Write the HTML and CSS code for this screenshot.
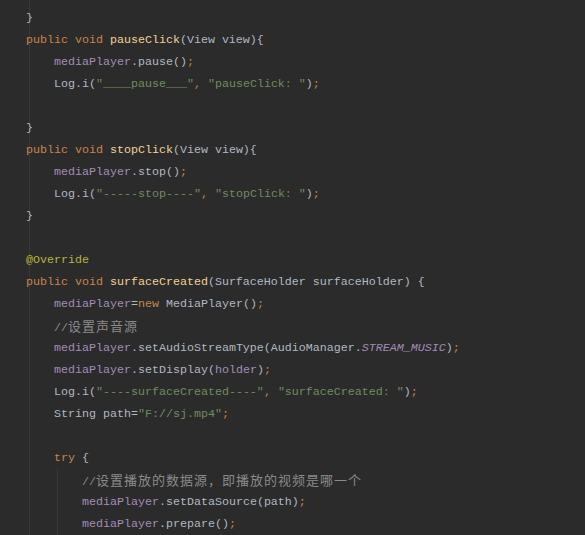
FILE: index.html
```html
<!DOCTYPE html>
<html lang="zh">
<head>
    <meta charset="UTF-8">
    <meta name="viewport" content="width=device-width, initial-scale=1.0">
    <title>SurfaceView</title>
    <link rel="stylesheet" href="styles.css">
</head>
<body>
    <div class="editor">
        <div class="line l0">}</div>
        <div class="line l0"><span class="kw">public void </span><span class="fn">pauseClick</span>(View view){</div>
        <div class="line l1"><span class="field">mediaPlayer</span>.pause()<span class="kw">;</span></div>
        <div class="line l1">Log.i(<span class="str">"____pause___"</span><span class="kw">, </span><span class="str">"pauseClick: "</span>)<span class="kw">;</span></div>
        <div class="line l0"> </div>
        <div class="line l0">}</div>
        <div class="line l0"><span class="kw">public void </span><span class="fn">stopClick</span>(View view){</div>
        <div class="line l1"><span class="field">mediaPlayer</span>.stop()<span class="kw">;</span></div>
        <div class="line l1">Log.i(<span class="str">"-----stop----"</span><span class="kw">, </span><span class="str">"stopClick: "</span>)<span class="kw">;</span></div>
        <div class="line l0">}</div>
        <div class="line l0"> </div>
        <div class="line l0"><span class="ann">@Override</span></div>
        <div class="line l0"><span class="kw">public void </span><span class="fn">surfaceCreated</span>(SurfaceHolder surfaceHolder) {</div>
        <div class="line l1"><span class="field">mediaPlayer</span>=<span class="kw">new </span>MediaPlayer()<span class="kw">;</span></div>
        <div class="line l1"><span class="comment">//<span class="cjk">设置声音源</span></span></div>
        <div class="line l1"><span class="field">mediaPlayer</span>.setAudioStreamType(AudioManager.<span class="const">STREAM_MUSIC</span>)<span class="kw">;</span></div>
        <div class="line l1"><span class="field">mediaPlayer</span>.setDisplay(<span class="field">holder</span>)<span class="kw">;</span></div>
        <div class="line l1">Log.i(<span class="str">"----surfaceCreated----"</span><span class="kw">, </span><span class="str">"surfaceCreated: "</span>)<span class="kw">;</span></div>
        <div class="line l1">String path=<span class="str">"F://sj.mp4"</span><span class="kw">;</span></div>
        <div class="line l1"> </div>
        <div class="line l1"><span class="kw">try </span>{</div>
        <div class="try-body">
            <div class="line l2"><span class="comment">//<span class="cjk">设置播放的数据源，即播放的视频是哪一个</span></span></div>
            <div class="line l2"><span class="field">mediaPlayer</span>.setDataSource(path)<span class="kw">;</span></div>
            <div class="line l2"><span class="field">mediaPlayer</span>.prepare()<span class="kw">;</span></div>
        </div>
    </div>
</body>
</html>
```

FILE: styles.css
```css
* {
    margin: 0;
    padding: 0;
    box-sizing: border-box;
}

html, body {
    background: #2b2b2b;
    height: 100%;
    overflow: hidden;
}

/* zone de code */
.editor {
    min-height: 100%;
    padding-top: 7px;
    font-family: "Liberation Mono", "Noto Sans CJK SC", monospace;
    font-size: 11.67px;
    color: #b0b8c2;
    /* guide d'indentation principal */
    background: linear-gradient(to right, transparent 29px, #383838 29px, #383838 30px, transparent 30px);
}

.line {
    height: 22px;
    line-height: 22px;
    white-space: pre;
}

.l0 { padding-left: 26px; }
.l1 { padding-left: 54px; }

.try-body {
    margin-left: 57px;
    border-left: 1px solid #383838;
}

.try-body .l2 { padding-left: 24px; }

/* couleurs de syntaxe */
.kw { color: #c9834a; }
.fn { color: #f3d296; }
.field { color: #a48cb8; }
.str { color: #6f8c5e; }
.comment { color: #8a8a8a; }
.ann { color: #b8b43a; }
.const {
    color: #a48cb8;
    font-style: italic;
}

.cjk {
    font-family: "Noto Sans CJK SC", sans-serif;
    font-size: 13px;
    letter-spacing: 1px;
}
```
